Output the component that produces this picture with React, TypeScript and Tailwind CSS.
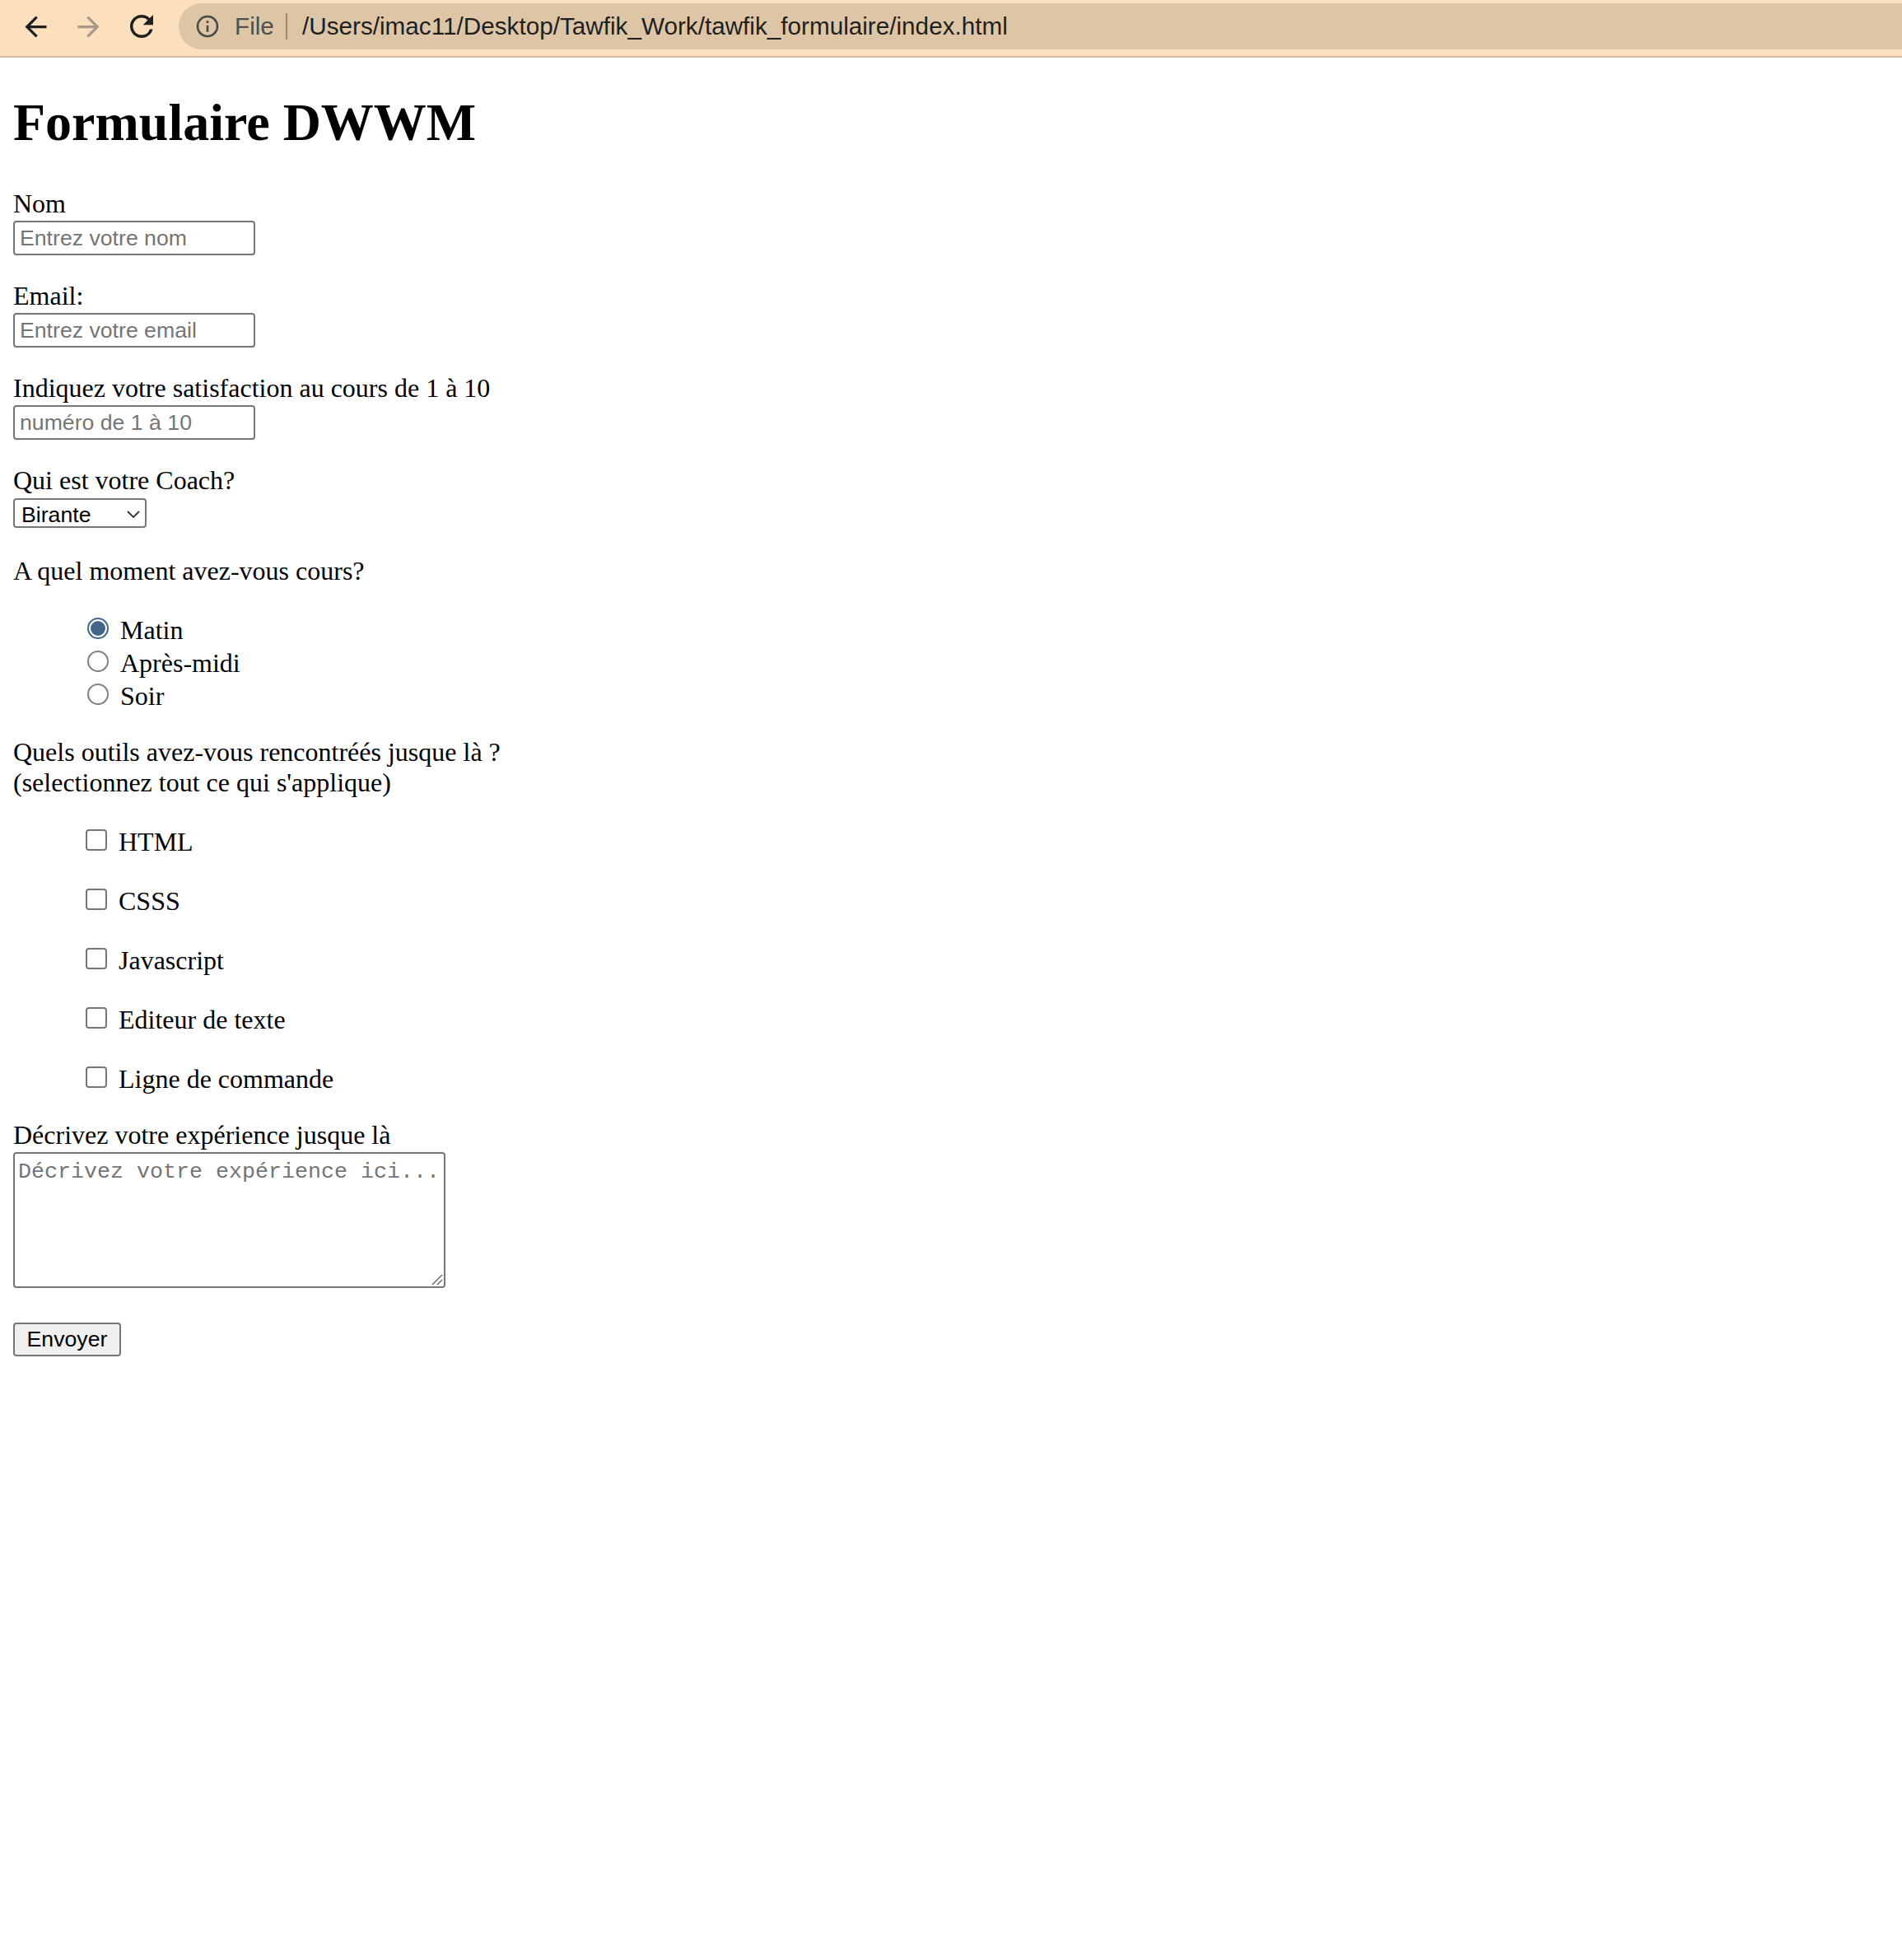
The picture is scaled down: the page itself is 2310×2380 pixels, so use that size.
import React from 'react';
import { MdArrowBack, MdArrowForward, MdRefresh, MdInfoOutline } from 'react-icons/md';

const moments = [
  { label: 'Matin', checked: true },
  { label: 'Après-midi', checked: false },
  { label: 'Soir', checked: false },
];

const outils = ['HTML', 'CSSS', 'Javascript', 'Editeur de texte', 'Ligne de commande'];

const App: React.FC = () => {
  return (
    <div className="min-h-screen bg-white">
      {/* Browser bar */}
      <div className="overflow-hidden border-b-2 border-[#cbb89e] bg-[#fce0be]">
        <div className="flex h-[68px] items-center pb-[4px]">
          <MdArrowBack size={39} className="ml-[24px] shrink-0 text-[#1f1f1f]" />
          <MdArrowForward size={39} className="ml-[25px] shrink-0 text-[#a6988a]" />
          <MdRefresh size={42} className="ml-[24px] shrink-0 text-[#1f1f1f]" />
          <div className="ml-[24px] mr-[-60px] flex h-[56px] flex-1 items-center rounded-full bg-[#dec5a5] pl-[19px] font-['Liberation_Sans',Arial,sans-serif] text-[29.7px]">
            <MdInfoOutline size={32} className="shrink-0 text-[#4a4a4a]" />
            <span className="ml-[17px] w-[62px] shrink-0 text-[#4f4f4f]">File</span>
            <span className="h-[32px] w-[2px] shrink-0 bg-[#9c8b77]" />
            <span className="ml-[18px] whitespace-nowrap text-[#1f1f1f]">
              /Users/imac11/Desktop/Tawfik_Work/tawfik_formulaire/index.html
            </span>
          </div>
        </div>
      </div>

      {/* Page */}
      <main className="px-4 font-['Liberation_Serif','Times_New_Roman',serif] text-[32px] leading-[37px] text-black">
        <h1 className="mt-[42px] mb-[43px] text-[64px] leading-[74px] font-bold">Formulaire DWWM</h1>

        <form onSubmit={(e) => e.preventDefault()}>
          <label className="block">Nom</label>
          <input
            type="text"
            placeholder="Entrez votre nom"
            className="mt-[2px] block h-[42px] w-[294px] rounded-[4px] border-2 border-[#767676] bg-white pl-[6px] font-['Liberation_Sans',Arial,sans-serif] text-[26.67px] placeholder:text-[#757575]"
          />

          <label className="mt-[31px] block">Email:</label>
          <input
            type="email"
            placeholder="Entrez votre email"
            className="mt-[2px] block h-[42px] w-[294px] rounded-[4px] border-2 border-[#767676] bg-white pl-[6px] font-['Liberation_Sans',Arial,sans-serif] text-[26.67px] placeholder:text-[#757575]"
          />

          <label className="mt-[31px] block">Indiquez votre satisfaction au cours de 1 à 10</label>
          <input
            type="text"
            placeholder="numéro de 1 à 10"
            className="mt-[2px] block h-[42px] w-[294px] rounded-[4px] border-2 border-[#767676] bg-white pl-[6px] font-['Liberation_Sans',Arial,sans-serif] text-[26.67px] placeholder:text-[#757575]"
          />

          <label className="mt-[31px] block">Qui est votre Coach?</label>
          <div className="relative mt-[3px] w-[162px]">
            <select
              defaultValue="Birante"
              className="block h-[36px] w-[162px] appearance-none rounded-[4px] border-2 border-[#767676] bg-white pl-[8px] font-['Liberation_Sans',Arial,sans-serif] text-[26.67px] text-black"
            >
              <option>Birante</option>
            </select>
            <svg
              className="pointer-events-none absolute left-[138px] top-[15px]"
              width="16"
              height="9"
              viewBox="0 0 16 9"
              fill="none"
            >
              <path d="M1 1l7 7 7-7" stroke="#333" strokeWidth="1.8" />
            </svg>
          </div>

          <p className="mt-[34px]">A quel moment avez-vous cours?</p>
          <div className="mt-[32px] pl-[80px]">
            {moments.map((m) => (
              <div key={m.label} className="pt-[2px] leading-[38px]">
                {m.checked ? (
                  <span className="ml-[10px] mr-[14px] inline-block h-[26px] w-[26px] overflow-hidden rounded-full border-2 border-[#44658a] bg-white p-[2px] align-baseline">
                    <span className="block h-full w-full rounded-full bg-[#44658a]" />
                  </span>
                ) : (
                  <span className="ml-[10px] mr-[14px] inline-block h-[26px] w-[26px] overflow-hidden rounded-full border-2 border-[#808080] bg-white align-baseline" />
                )}
                {m.label}
              </div>
            ))}
          </div>

          <p className="mt-[31px]">
            Quels outils avez-vous rencontréés jusque là ?<br />
            (selectionnez tout ce qui s'applique)
          </p>
          <div className="mt-[32px] flex flex-col gap-[32px] pl-[80px]">
            {outils.map((o) => (
              <div key={o} className="pt-[2px] leading-[38px]">
                <span className="ml-[8px] mr-[14px] inline-block h-[26px] w-[26px] overflow-hidden rounded-[4px] border-2 border-[#767676] bg-white align-baseline" />
                {o}
              </div>
            ))}
          </div>

          <label className="mt-[31px] block">Décrivez votre expérience jusque là</label>
          <div className="relative mt-[2px] w-[525px]">
            <textarea
              placeholder="Décrivez votre expérience ici..."
              className="block h-[165px] w-[525px] resize-none rounded-[4px] border-2 border-[#767676] bg-white px-[4px] py-[4px] font-['Liberation_Mono','Courier_New',monospace] text-[26.67px] placeholder:text-[#757575]"
            />
            <svg
              className="pointer-events-none absolute bottom-[3px] right-[3px]"
              width="16"
              height="16"
              viewBox="0 0 16 16"
              fill="none"
            >
              <path d="M15 3L3 15M15 9L9 15" stroke="#6b6b6b" strokeWidth="1.5" />
            </svg>
          </div>

          <button
            type="submit"
            className="mt-[42px] block h-[41px] w-[131px] rounded-[4px] border-2 border-[#767676] bg-[#efefef] font-['Liberation_Sans',Arial,sans-serif] text-[26.67px] text-black"
          >
            Envoyer
          </button>
        </form>
      </main>
    </div>
  );
};

export default App;
